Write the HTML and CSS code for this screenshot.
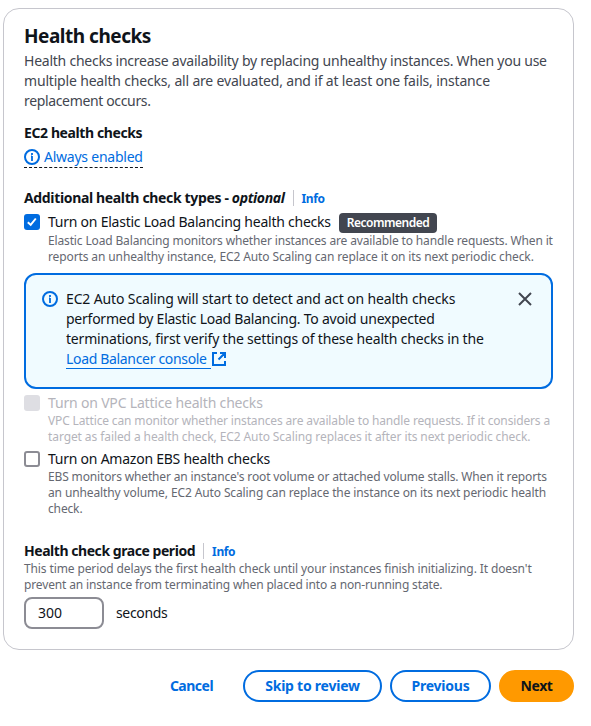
FILE: index.html
```
<!DOCTYPE html>
<html lang="en">
<head>
<meta charset="utf-8">
<title>Health checks</title>
<link rel="stylesheet" href="styles.css">
</head>
<body>
<main class="card">
  <h2 class="title">Health checks</h2>
  <p class="intro">Health checks increase availability by replacing unhealthy instances. When you use<br><span class="loose">multiple health checks, all are evaluated, and if at least one fails, instance</span><br><span class="tight">replacement occurs.</span></p>

  <section class="ec2">
    <h3 class="label">EC2 health checks</h3>
    <span class="status"><svg class="icon" viewBox="0 0 16 16"><circle cx="8" cy="8" r="7"/><path d="M8 12V7M7 7.5h1M8 4v2"/></svg><span class="status-text">Always enabled</span></span>
  </section>

  <section class="types">
    <div class="heading"><h3 class="label label-types">Additional health check types - <em>optional</em></h3><a class="info">Info</a></div>

    <div class="option first">
      <span class="box checked"><svg viewBox="0 0 16 16"><path d="M3.8 8.2l2.9 2.7 5.1-6.4"/></svg></span>
      <div class="option-body">
        <div class="option-name"><span class="name-elb">Turn on Elastic Load Balancing health checks</span><span class="badge">Recommended</span></div>
        <p class="hint">Elastic Load Balancing monitors whether instances are available to handle requests. When it<br><span class="hint-loose">reports an unhealthy instance, EC2 Auto Scaling can replace it on its next periodic check.</span></p>
      </div>
    </div>

    <div class="alert">
      <svg class="icon" viewBox="0 0 16 16"><circle cx="8" cy="8" r="7"/><path d="M8 12V7M7 7.5h1M8 4v2"/></svg>
      <p class="alert-text"><span class="looser">EC2 Auto Scaling will start to detect and act on health checks</span><br>performed by Elastic Load Balancing. To avoid unexpected<br><span class="loose">terminations, first verify the settings of these health checks in the</span><br><a class="link">Load Balancer console</a><svg class="external" viewBox="0 0 16 16"><path d="M6 2H2v12h12v-4M9 2h5v5M13.5 2.5L7.5 8.5"/></svg></p>
      <svg class="close" viewBox="0 0 16 16"><path d="M2 2l12 12M14 2L2 14"/></svg>
    </div>

    <div class="option disabled">
      <span class="box"></span>
      <div class="option-body">
        <div class="option-name loose">Turn on VPC Lattice health checks</div>
        <p class="hint">VPC Lattice can monitor whether instances are available to handle requests. If it considers a<br><span class="hint-looser">target as failed a health check, EC2 Auto Scaling replaces it after its next periodic check.</span></p>
      </div>
    </div>

    <div class="option">
      <span class="box"></span>
      <div class="option-body">
        <div class="option-name">Turn on Amazon EBS health checks</div>
        <p class="hint">EBS monitors whether an instance's root volume or attached volume stalls. When it reports<br><span class="hint-loose">an unhealthy volume, EC2 Auto Scaling can replace the instance on its next periodic health</span><br>check.</p>
      </div>
    </div>
  </section>

  <section class="grace">
    <div class="heading"><h3 class="label label-grace">Health check grace period</h3><a class="info">Info</a></div>
    <p class="hint"><span class="hint-loose">This time period delays the first health check until your instances finish initializing. It doesn't</span><br>prevent an instance from terminating when placed into a non-running state.</p>
    <div class="field"><span class="input">300</span><span class="tight">seconds</span></div>
  </section>
</main>

<footer class="actions">
  <a class="btn cancel">Cancel</a>
  <a class="btn skip">Skip to review</a>
  <a class="btn prev">Previous</a>
  <a class="btn next">Next</a>
</footer>
</body>
</html>
```

FILE: styles.css
```
* { box-sizing: border-box; }
body {
  margin: 0;
  padding: 8px 17px 0 3px;
  background: #fff;
  color: #0f141a;
  font: 14px/20px "Noto Sans", "Open Sans", sans-serif;
  letter-spacing: -0.24px;
  white-space: nowrap;
}
h2, h3, p { margin: 0; }
.loose { letter-spacing: -0.18px; }
.looser { letter-spacing: -0.13px; }
.tight { letter-spacing: -0.35px; }
.card {
  width: 571px;
  height: 642px;
  padding: 15px 20px 0;
  border: 1px solid #c6c6cd;
  border-radius: 16px;
}
.title { font-size: 19px; line-height: 24px; letter-spacing: -0.48px; }
.intro { margin-top: 3px; color: #424650; }
.ec2 { height: 50px; margin-top: 12px; }
.label { font-size: 14px; line-height: 20px; font-weight: 700; letter-spacing: -0.4px; }
.label-types { letter-spacing: -0.35px; }
.label-grace { letter-spacing: -0.45px; }
.status {
  display: inline-flex;
  align-items: center;
  gap: 4px;
  height: 21px;
  margin-top: 4px;
  color: #006ce0;
  border-bottom: 1px dashed #0f141a;
}
.icon { flex: none; width: 16px; height: 16px; fill: none; stroke: #006ce0; stroke-width: 2; }
.icon path + path, .icon path { stroke-width: 1.8; }
.types { margin-top: 15px; }
.heading { display: flex; align-items: center; }
.info {
  height: 16px;
  margin-left: 8px;
  padding-left: 8px;
  border-left: 1px solid #c6c6cd;
  color: #006ce0;
  font-size: 12px;
  line-height: 17px;
  font-weight: 700;
  letter-spacing: -0.4px;
}
.option { display: flex; gap: 8px; }
.option.first { margin-top: 4px; }
.option.first .hint { margin-top: 1px; }
.option + .option { margin-top: 4px; }
.box {
  flex: none;
  width: 16px;
  height: 16px;
  margin-top: 2px;
  border: 2px solid #8c8c94;
  border-radius: 3px;
}
.box.checked { border: 0; background: #006ce0; }
.box svg { display: block; fill: none; stroke: #fff; stroke-width: 2; }
.option-name { display: flex; height: 20px; }
.badge {
  height: 20px;
  margin: 1px 0 0 8px;
  padding: 0 8px;
  border-radius: 4px;
  background: #424650;
  color: #fff;
  font-size: 12px;
  font-weight: 600;
  letter-spacing: -0.5px;
}
.hint { color: #656871; font-size: 12px; line-height: 16px; letter-spacing: -0.145px; }
.hint-loose { letter-spacing: -0.115px; }
.hint-looser { letter-spacing: -0.09px; }
.alert {
  display: flex;
  height: 116px;
  margin: 8px 0 4px;
  padding: 14px 18px 0 16px;
  border: 2px solid #006ce0;
  border-radius: 12px;
  background: #f0fbff;
}
.alert .icon { margin-top: 2px; }
.alert-text { flex: 1; margin-left: 8px; }
.link {
  display: inline-block;
  height: 20px;
  padding-right: 4px;
  border-bottom: 1px solid #006ce0;
  color: #006ce0;
  letter-spacing: -0.33px;
}
.external { width: 16px; height: 16px; vertical-align: -3px; fill: none; stroke: #006ce0; stroke-width: 2; }
.close { width: 16px; height: 16px; margin-top: 2px; fill: none; stroke: #424650; stroke-width: 2; }
.disabled, .disabled .hint { color: #b4b4bb; }
.disabled .box { border: 0; background: #dedee3; }
.grace { margin-top: 24px; }
.field { display: flex; align-items: center; gap: 12px; margin-top: 4px; }
.input { width: 80px; height: 32px; padding: 4px 12px; border: 2px solid #8c8c94; border-radius: 8px; letter-spacing: 0; }
.actions { display: flex; width: 571px; margin-top: 20px; justify-content: flex-end; gap: 8px; }
.btn {
  height: 32px;
  border: 2px solid #006ce0;
  border-radius: 20px;
  color: #006ce0;
  font-weight: 700;
  line-height: 28px;
  text-align: center;
}
.cancel { width: 87px; border-color: transparent; letter-spacing: -0.5px; }
.skip { width: 139px; }
.prev { width: 101px; }
.next { width: 75px; border-color: #f90; background: #f90; color: #0f141a; letter-spacing: -0.4px; }
```
